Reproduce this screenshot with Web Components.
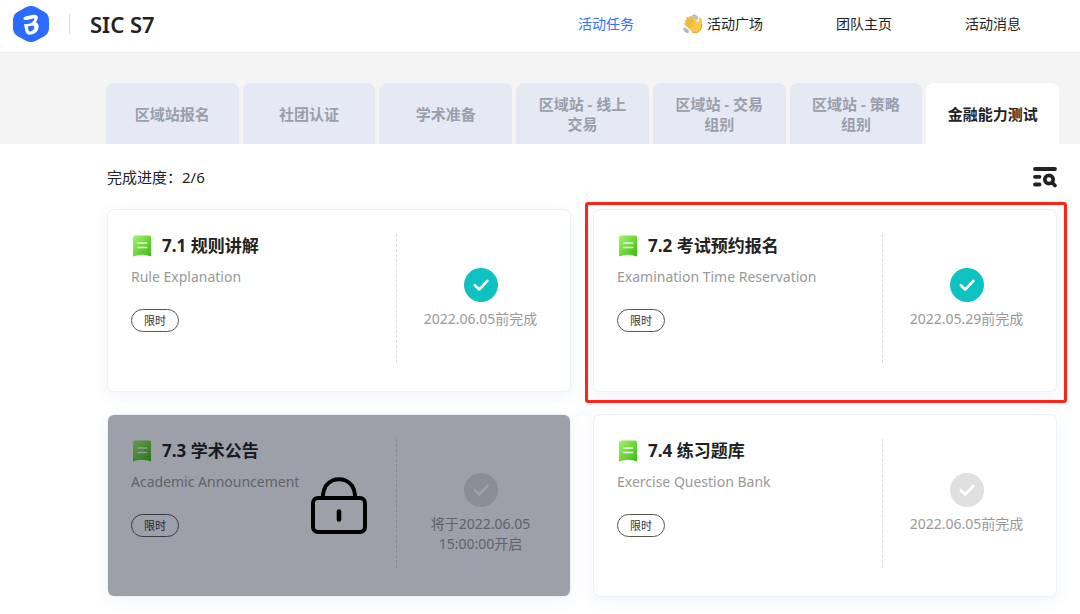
<!DOCTYPE html>
<html lang="zh-CN">
<head>
<meta charset="utf-8">
<meta name="viewport" content="width=device-width, initial-scale=1">
<title>SIC S7</title>
<style>
  body { margin: 0; background: #fff; color: #222; font-family: "Noto Sans", "Noto Sans CJK SC", sans-serif; }
</style>
</head>
<body>
<activity-page></activity-page>
<script>
const define = (name, html, setup) => {
  const template = document.createElement('template');
  template.innerHTML = html;
  customElements.define(name, class extends HTMLElement {
    constructor() {
      super();
      this.attachShadow({ mode: 'open' }).append(template.content.cloneNode(true));
    }
    connectedCallback() { if (setup) setup(this, this.shadowRoot); }
  });
};

define('brand-mark', `
<style>
  :host { display: flex; align-items: center; }
  svg { display: block; width: 38px; height: 38px; }
  i { width: 1px; height: 20px; background: #ddd; margin: 0 20px 0 19px; }
  strong { font-size: 22px; line-height: 28px; font-weight: 600; color: #222; }
</style>
<svg viewBox="0 0 38 38" aria-hidden="true">
  <path d="M14 2.200q5-2.400 10 0l8.200 4.500q4.600 2.800 4.800 7.700v9.200q-.2 4.900-4.800 7.700L24 35.800q-5 2.400-10 0l-8.200-4.500Q1.200 28.500 1 23.600v-9.200q.2-4.900 4.800-7.700z" fill="#2b6bff"/>
  <path d="M11.200 13.400q.6-1.700 3-2.200l7.200-1.500q5.200-.5 4.300 3.700-.5 2.500-2.100 3.800 3.600 1.400 3 5.200-1 6-7.600 7.200-4.800.6-5.600-3.600l-1.500-6.900q3.500.4 7.200-1.100 2.600-1.200 3.200-3.800.2-1-1.200-.8l-6.200 1.500q-2.600.4-3.700-1.500zM15.700 21.500l.8 3.800q.4 1.500 2 1.200 3.200-.7 3.900-3.500.3-2.300-2-2.400z" fill="#fff" fill-rule="evenodd"/>
</svg>
<i></i><strong><slot></slot></strong>`);

define('nav-link', `
<style>
  :host { display: block; position: relative; }
  a { display: block; color: #222; text-decoration: none; font-size: 14px; line-height: 20px; white-space: nowrap; }
  :host([active]) a { color: #3470ff; }
  ::slotted(svg) { position: absolute; right: calc(100% + 4px); top: 0; width: 20px; height: 20px; }
</style>
<slot name="icon"></slot><a href="#"><slot></slot></a>`);

define('site-header', `
<style>
  :host { display: flex; align-items: center; justify-content: space-between; box-sizing: border-box; min-height: 52px; padding: 0 59px 4px 12px; background: #fff; }
  nav { display: flex; gap: 73px; }
</style>
<brand-mark>SIC S7</brand-mark>
<nav aria-label="主导航">
  <nav-link active>活动任务</nav-link>
  <nav-link>
    <svg slot="icon" viewBox="0 0 20 20" aria-hidden="true">
      <path d="M10 1.500q3-.8 4.500 3M9.500 3.200q2.600 0 3.600 2.200M.8 14.500q.6 3 4 4M2.600 14.200q.6 2 2.600 2.700" fill="none" stroke="#b4bac3" stroke-width="1.700" stroke-linecap="round"/>
      <g stroke="#f5be3e" stroke-width="3" stroke-linecap="round" fill="none"><path d="M3.300 7l6 6M4.600 4.500l6 7M7.500 3.300l6 7M2.800 10l6 5.500"/></g>
      <path d="M5.500 11l7-5.500 2.800 3q.6-2.300.7-3.800.8-2 2.300-.4 1 3 .8 7.200-.3 5.200-4.400 7.200-3.600 1.300-6-1.100z" fill="#fac84b"/>
      <path d="M3.500 8.700l5 5M5 6.200l5 5.600M7.400 4.800l4.500 5.500" stroke="#d99a26" stroke-width=".6" fill="none"/>
      <path d="M9 18.200q5 1.300 8-2 2-2.500 1.900-6" fill="none" stroke="#eda52c" stroke-width="1"/>
    </svg>活动广场</nav-link>
  <nav-link>团队主页</nav-link>
  <nav-link>活动消息</nav-link>
</nav>`);

define('stage-tab', `
<style>
  :host { display: grid; }
  button { font: 700 15px/20px "Noto Sans", "Noto Sans CJK SC", sans-serif; color: #999fa9; background: #e5e9f4; border: 0; border-radius: 8px 8px 0 0; padding: 0 18px; min-height: 61px; cursor: pointer; }
  :host([selected]) button { background: #fff; color: #222; }
</style>
<button type="button"><slot></slot></button>`);

define('stage-tabs', `
<style>
  :host { display: block; background: #f4f4f4; padding: 30px 21px 0 106px; border-top: 1px solid #ededed; }
  div { display: grid; grid-template-columns: repeat(7, 1fr); gap: 4px; }
</style>
<div>
  <stage-tab>区域站报名</stage-tab>
  <stage-tab>社团认证</stage-tab>
  <stage-tab>学术准备</stage-tab>
  <stage-tab>区域站 - 线上交易</stage-tab>
  <stage-tab>区域站 - 交易组别</stage-tab>
  <stage-tab>区域站 - 策略组别</stage-tab>
  <stage-tab selected>金融能力测试</stage-tab>
</div>`);

define('progress-bar-row', `
<style>
  :host { display: flex; align-items: center; justify-content: space-between; font-size: 15px; line-height: 24px; padding: 21px 0 20px; }
  button { border: 0; padding: 0; background: none; display: block; cursor: pointer; }
  svg { display: block; width: 24px; height: 22px; }
</style>
<span><slot></slot></span>
<button type="button" aria-label="筛选任务">
  <svg viewBox="0 0 24 22" fill="none" stroke="#222" stroke-linecap="round" aria-hidden="true">
    <path d="M2 3h20M2 10.800h4.500M2 18.500h4.500" stroke-width="3.800"/>
    <circle cx="16" cy="13.500" r="4.200" stroke-width="3.700"/>
    <path d="M19.500 17l2.500 2.500" stroke-width="3.600"/>
  </svg>
</button>`);

define('status-mark', `
<style>
  :host { display: block; width: 34px; height: 34px; color: #e0e0e0; }
  :host([done]) { color: #0dc2c0; }
  svg { display: block; width: 100%; height: 100%; }
</style>
<svg viewBox="0 0 34 34" aria-hidden="true">
  <circle cx="17" cy="17" r="17" fill="currentColor"/>
  <path d="M10.800 17.200l4.400 4.300 8.200-8.600" fill="none" stroke="#fff" stroke-width="2.600" stroke-linecap="round" stroke-linejoin="round"/>
</svg>`);

define('task-card', `
<style>
  :host { display: flex; position: relative; box-sizing: border-box; min-height: 183px; padding: 24px 6px 28px 23px; background: #fff; border: 1px solid #ecf0fa; border-radius: 7px; box-shadow: 0 4px 16px rgba(60, 100, 200, .07); }
  .info { flex: 1; min-width: 0; }
  h2 { display: flex; align-items: center; gap: 10px; margin: 0; font-size: 17px; line-height: 24px; font-weight: 700; }
  h2 svg { width: 20px; height: 22px; margin-left: 1px; }
  p { margin: 8px 0 20px; font-size: 14px; line-height: 22px; color: #999; }
  .tag { display: inline-block; box-sizing: border-box; height: 23px; padding: 0 12px; border: 1px solid #555; border-radius: 12px; font-size: 11px; line-height: 21px; color: #333; }
  .status { display: flex; flex-direction: column; align-items: center; box-sizing: border-box; width: 168px; border-left: 1px dashed #ddd; padding-top: 34px; font-size: 14px; line-height: 20px; color: #999; text-align: center; }
  .status span { margin-top: 7px; }
  .veil, .frame { display: none; position: absolute; }
  :host([locked]) .veil { display: grid; place-items: center; inset: 0; border-radius: 6px; background: rgba(9, 17, 37, .4); }
  .veil svg { width: 58px; height: 60px; }
  :host([highlighted]) .frame { display: block; inset: -8px -11px -12px -9px; border: 3px solid #ff2416; border-radius: 3px; pointer-events: none; }
</style>
<div class="info">
  <h2>
    <svg viewBox="0 0 20 22" aria-hidden="true">
      <defs><linearGradient id="leaf" x1="0" y1="0" x2="1" y2="1"><stop offset="0" stop-color="#a3f56b"/><stop offset="1" stop-color="#3bba10"/></linearGradient></defs>
      <path d="M3 .5h14.500q1.500 0 1.500 1.500v19.500q-9-3.500-18 0V2.500Q1 .5 3 .5z" fill="url(#leaf)"/>
      <path d="M6 8h8.500M6 12.500h8.500" stroke="#efffe7" stroke-width="1.600" stroke-linecap="round"/>
    </svg>
    <span class="title"></span>
  </h2>
  <p></p>
  <span class="tag">限时</span>
</div>
<div class="status"><status-mark></status-mark><span><slot></slot></span></div>
<div class="veil">
  <svg viewBox="0 0 58 60" fill="none" stroke="#000" stroke-width="4" stroke-linecap="round" aria-hidden="true">
    <rect x="3" y="22" width="52" height="34" rx="5"/>
    <path d="M13 21v-2Q14 8 22.500 4.500q6.500-2.600 13 0Q44 8 45 19v2"/>
    <path d="M29 35.500v8" stroke-width="4.600"/>
  </svg>
</div>
<div class="frame"></div>`, (host, root) => {
  root.querySelector('.title').textContent = host.getAttribute('heading');
  root.querySelector('p').textContent = host.getAttribute('subtitle');
  root.querySelector('status-mark').toggleAttribute('done', host.hasAttribute('done'));
});

define('activity-page', `
<style>
  :host { display: block; }
  main { padding: 0 23px 17px 107px; }
  .cards { display: grid; grid-template-columns: 1fr 1fr; gap: 22px; }
</style>
<site-header></site-header>
<stage-tabs></stage-tabs>
<main>
  <progress-bar-row>完成进度：2/6</progress-bar-row>
  <div class="cards">
    <task-card heading="7.1 规则讲解" subtitle="Rule Explanation" done>2022.06.05前完成</task-card>
    <task-card heading="7.2 考试预约报名" subtitle="Examination Time Reservation" done highlighted>2022.05.29前完成</task-card>
    <task-card heading="7.3 学术公告" subtitle="Academic Announcement" locked>将于2022.06.05<br>15:00:00开启</task-card>
    <task-card heading="7.4 练习题库" subtitle="Exercise Question Bank">2022.06.05前完成</task-card>
  </div>
</main>`);
</script>
</body>
</html>
